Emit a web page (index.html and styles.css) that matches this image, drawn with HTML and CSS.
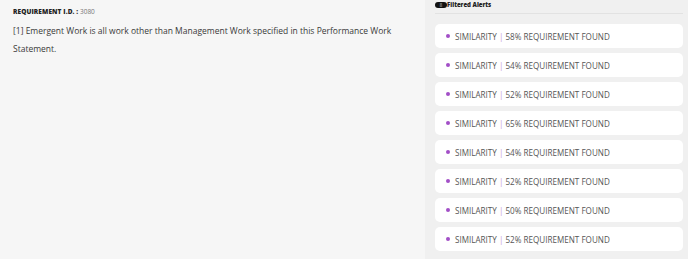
FILE: index.html
```html
<!DOCTYPE html>
<html>
<head>
<meta charset="utf-8">
<link rel="stylesheet" href="styles.css">
</head>
<body>
<div class="page">
  <section class="req">
    <div class="req-id"><b>REQUIREMENT I.D. :</b> <span>3080</span></div>
    <p class="req-text">[1] Emergent Work is all work other than Management Work specified in this Performance Work Statement.</p>
  </section>
  <aside class="alerts">
    <div class="alerts-head"><span class="badge">8</span><span class="alerts-title">Filtered Alerts</span></div>
    <ul class="alert-list">
      <li class="alert"><span class="dot"></span>SIMILARITY <span class="pipe">|</span> 58% REQUIREMENT FOUND</li>
      <li class="alert"><span class="dot"></span>SIMILARITY <span class="pipe">|</span> 54% REQUIREMENT FOUND</li>
      <li class="alert"><span class="dot"></span>SIMILARITY <span class="pipe">|</span> 52% REQUIREMENT FOUND</li>
      <li class="alert"><span class="dot"></span>SIMILARITY <span class="pipe">|</span> 65% REQUIREMENT FOUND</li>
      <li class="alert"><span class="dot"></span>SIMILARITY <span class="pipe">|</span> 54% REQUIREMENT FOUND</li>
      <li class="alert"><span class="dot"></span>SIMILARITY <span class="pipe">|</span> 52% REQUIREMENT FOUND</li>
      <li class="alert"><span class="dot"></span>SIMILARITY <span class="pipe">|</span> 50% REQUIREMENT FOUND</li>
      <li class="alert"><span class="dot"></span>SIMILARITY <span class="pipe">|</span> 52% REQUIREMENT FOUND</li>
    </ul>
  </aside>
</div>
</body>
</html>
```
FILE: styles.css
```css
html, body { margin: 0; padding: 0; }
body {
  font-family: "Open Sans", "Liberation Sans", sans-serif;
  color: #333;
  background: #f6f6f6;
}
.page {
  display: flex;
  width: 688px;
  height: 259px;
  overflow: hidden;
}
.req {
  width: 425px;
  box-sizing: border-box;
  padding: 7px 13px 0 13px;
  background: #f6f6f6;
}
.req-id {
  font-size: 6.5px;
  line-height: 10px;
  color: #222;
}
.req-id b { font-weight: 800; letter-spacing: 0.1px; }
.req-id span { color: #777; }
.req-text {
  margin: 5px 0 0 0;
  font-size: 8.5px;
  line-height: 18px;
  color: #3a3a3a;
  width: 390px;
}
.alerts {
  flex: 1;
  background: #f0f0f0;
  padding: 0 5px 0 10px;
}
.alerts-head {
  display: flex;
  align-items: center;
  height: 13px;
  border-bottom: 1px solid #e2e2e2;
}
.badge {
  display: inline-flex;
  align-items: center;
  justify-content: center;
  width: 12px;
  height: 6px;
  border-radius: 3px;
  background: #111;
  color: #777;
  font-size: 5px;
  font-weight: 700;
  margin-top: -4px;
}
.alerts-title {
  font-size: 6px;
  font-weight: 800;
  color: #222;
  margin-top: -4px;
}
.alert-list {
  list-style: none;
  margin: 10px 0 0 0;
  padding: 0;
  display: flex;
  flex-direction: column;
  gap: 5px;
}
.alert {
  height: 24px;
  background: #fff;
  border-radius: 5px;
  display: flex;
  align-items: center;
  padding-left: 11px;
  font-size: 8.1px;
  color: #555;
  white-space: pre;
}
.dot {
  width: 4px;
  height: 4px;
  border-radius: 50%;
  background: #a24fc7;
  margin-right: 5px;
}
.pipe { color: #c79ad8; }
```
